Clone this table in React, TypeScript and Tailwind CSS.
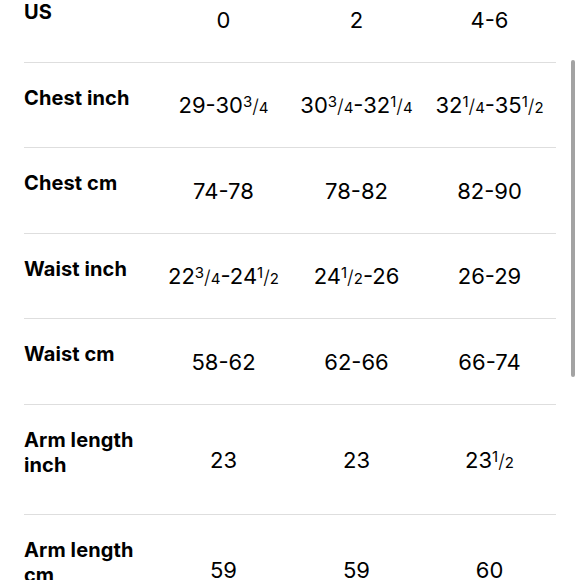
import React from "react";

function Frac({ n, d }: { n: string; d: string }) {
  return (
    <span className="inline-flex items-baseline tracking-normal">
      <span className="text-[15px] relative -top-[6px]">{n}</span>
      <span className="text-[19px] font-light">/</span>
      <span className="text-[15px]">{d}</span>
    </span>
  );
}

function Value({ parts }: { parts: React.ReactNode }) {
  return (
    <div className="text-center text-[22px] text-black pt-[1px] whitespace-nowrap">{parts}</div>
  );
}

const rows: { label: React.ReactNode; values: React.ReactNode[]; h: string }[] = [
  { label: "US", values: ["0", "2", "4-6"], h: "h-[86px]" },
  {
    label: "Chest inch",
    values: [
      <>29-30<Frac n="3" d="4" /></>,
      <>30<Frac n="3" d="4" />-32<Frac n="1" d="4" /></>,
      <>32<Frac n="1" d="4" />-35<Frac n="1" d="2" /></>,
    ],
    h: "h-[85px]",
  },
  { label: "Chest cm", values: ["74-78", "78-82", "82-90"], h: "h-[86px]" },
  {
    label: "Waist inch",
    values: [
      <>22<Frac n="3" d="4" />-24<Frac n="1" d="2" /></>,
      <>24<Frac n="1" d="2" />-26</>,
      "26-29",
    ],
    h: "h-[85px]",
  },
  { label: "Waist cm", values: ["58-62", "62-66", "66-74"], h: "h-[86px]" },
  {
    label: <>Arm length<br />inch</>,
    values: ["23", "23", <>23<Frac n="1" d="2" /></>],
    h: "h-[110px]",
  },
  {
    label: <>Arm length<br />cm</>,
    values: ["59", "59", "60"],
    h: "h-[110px]",
  },
];

export default function App() {
  return (
    <div
      className="relative w-[580px] h-[580px] overflow-hidden bg-white"
      style={{ fontFamily: "Inter, 'Liberation Sans', sans-serif" }}
    >
      <div className="px-6 -mt-[23px]">
        {rows.map((row, i) => (
          <div
            key={i}
            className={`grid grid-cols-4 items-center border-b border-[#dedede] ${row.h}`}
          >
            <div className="text-[20px] font-bold leading-[25px] tracking-[0.1px] text-black pb-[14px]">
              {row.label}
            </div>
            {row.values.map((v, j) => (
              <Value key={j} parts={v} />
            ))}
          </div>
        ))}
      </div>

      {/* scroll indicator */}
      <div className="absolute right-[5px] top-[60px] w-[4px] h-[317px] rounded-full bg-[#a3a3a3]" />
    </div>
  );
}
